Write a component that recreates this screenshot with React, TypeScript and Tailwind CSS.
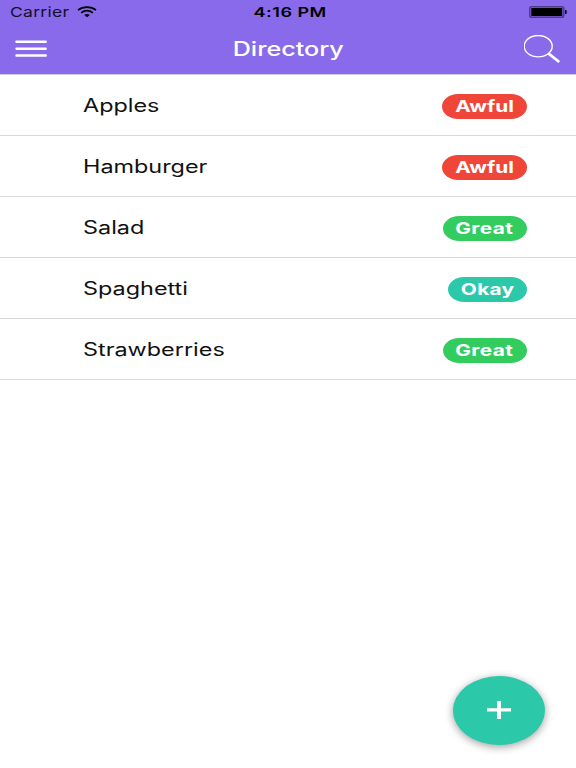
const foods = [
  { name: "Apples", rating: "Awful" },
  { name: "Hamburger", rating: "Awful" },
  { name: "Salad", rating: "Great" },
  { name: "Spaghetti", rating: "Okay" },
  { name: "Strawberries", rating: "Great" }
];

const badgeStyles: Record<string, string> = {
  Awful: "w-[84.5px] bg-[#f04639]",
  Great: "w-[84px] bg-[#33cd5f] tracking-[0.3px]",
  Okay: "w-[78.5px] bg-[#2bc8aa] tracking-[0.2px]"
};

function StatusBar() {
  return (
    <div className="grid h-6 grid-cols-3 items-center pr-[9px] pl-[10px] text-black">
      <div className="flex items-center">
        <span className="w-[59px] origin-left scale-x-[1.3] text-[13.5px] leading-6 tracking-[0.2px] text-[#15102a]">
          Carrier
        </span>
        <svg width="20" height="12" viewBox="0 0 20 12" className="ml-[7.5px]" fill="none" stroke="currentColor" strokeWidth="1.7">
          <path d="M1 4.2C6 .1 14 .1 19 4.2" />
          <path d="M4.2 6.8c3.3-2.8 8.3-2.8 11.6 0" />
          <path d="M7.2 8.9c1.6-1.3 4-1.3 5.6 0L10 11.2z" fill="currentColor" stroke="none" />
        </svg>
      </div>
      <span className="scale-x-[1.34] pl-[2px] text-center text-[13.5px] leading-6 font-semibold tracking-[0.35px]">
        4:16 PM
      </span>
      <svg width="38" height="12" viewBox="0 0 38 12" className="justify-self-end">
        <rect x=".75" y=".75" width="34" height="10.5" rx="1.8" fill="none" stroke="#50398e" strokeWidth="1.5" />
        <rect x="2.3" y="2" width="31" height="8" fill="#000" />
        <path d="M36 4h1.4q.6 2 0 4H36z" fill="#000" />
      </svg>
    </div>
  );
}

function Header() {
  return (
    <header className="h-[75px] border-b border-[#cfcde0] bg-[#886aea]">
      <StatusBar />
      <div className="flex h-[50px] items-center justify-between pr-[15px] pl-[15px] text-white">
        <button aria-label="Menu">
          <svg width="36" height="18" viewBox="0 0 36 18" fill="currentColor">
            <rect x=".4" y=".5" width="31.4" height="2.5" rx=".8" />
            <rect x=".4" y="7.4" width="31.4" height="2.5" rx=".8" />
            <rect x=".4" y="14.3" width="31.4" height="2.5" rx=".8" />
          </svg>
        </button>
        <h1 className="scale-x-[1.29] pt-0.5 pl-px text-[19.5px] font-medium">Directory</h1>
        <button aria-label="Search">
          <svg width="37" height="29" viewBox="0 0 37 29" fill="none" stroke="currentColor">
            <ellipse cx="14.2" cy="11.2" rx="14" ry="10.7" strokeWidth="1.4" className="overflow-visible" />
            <path d="M24.3 18.4L35.2 27" strokeWidth="2.8" />
          </svg>
        </button>
      </div>
    </header>
  );
}

export default function App() {
  return (
    <main className="flex h-screen w-full flex-col overflow-hidden bg-white font-['Inter',sans-serif]">
      <Header />
      <ul>
        {foods.map((food) => (
          <li
            key={food.name}
            className="flex h-[61px] items-center justify-between border-b border-[#d9d9d9] pr-[49.5px] pl-[83px]"
          >
            <span className="origin-left scale-x-[1.3] text-[18px] text-[#111]">{food.name}</span>
            <span
              className={`mt-0.5 flex h-[25px] items-center justify-center rounded-[16px/12.5px] text-white ${badgeStyles[food.rating]}`}
            >
              <span className="scale-x-[1.3] text-[16px] leading-none font-bold">{food.rating}</span>
            </span>
          </li>
        ))}
      </ul>
      <button
        aria-label="Add"
        className="mt-auto mr-[31px] mb-[23.5px] flex h-[69px] w-[92px] items-center justify-center self-end rounded-[50%] bg-[#2bc8aa] text-white shadow-[0_2px_9px_rgba(0,0,0,0.38)]"
      >
        <svg width="24" height="18" viewBox="0 0 24 18" fill="currentColor">
          <path d="M10 0h4v7.3h10v3.2H14V18h-4v-7.5H0V7.3h10z" />
        </svg>
      </button>
    </main>
  );
}
